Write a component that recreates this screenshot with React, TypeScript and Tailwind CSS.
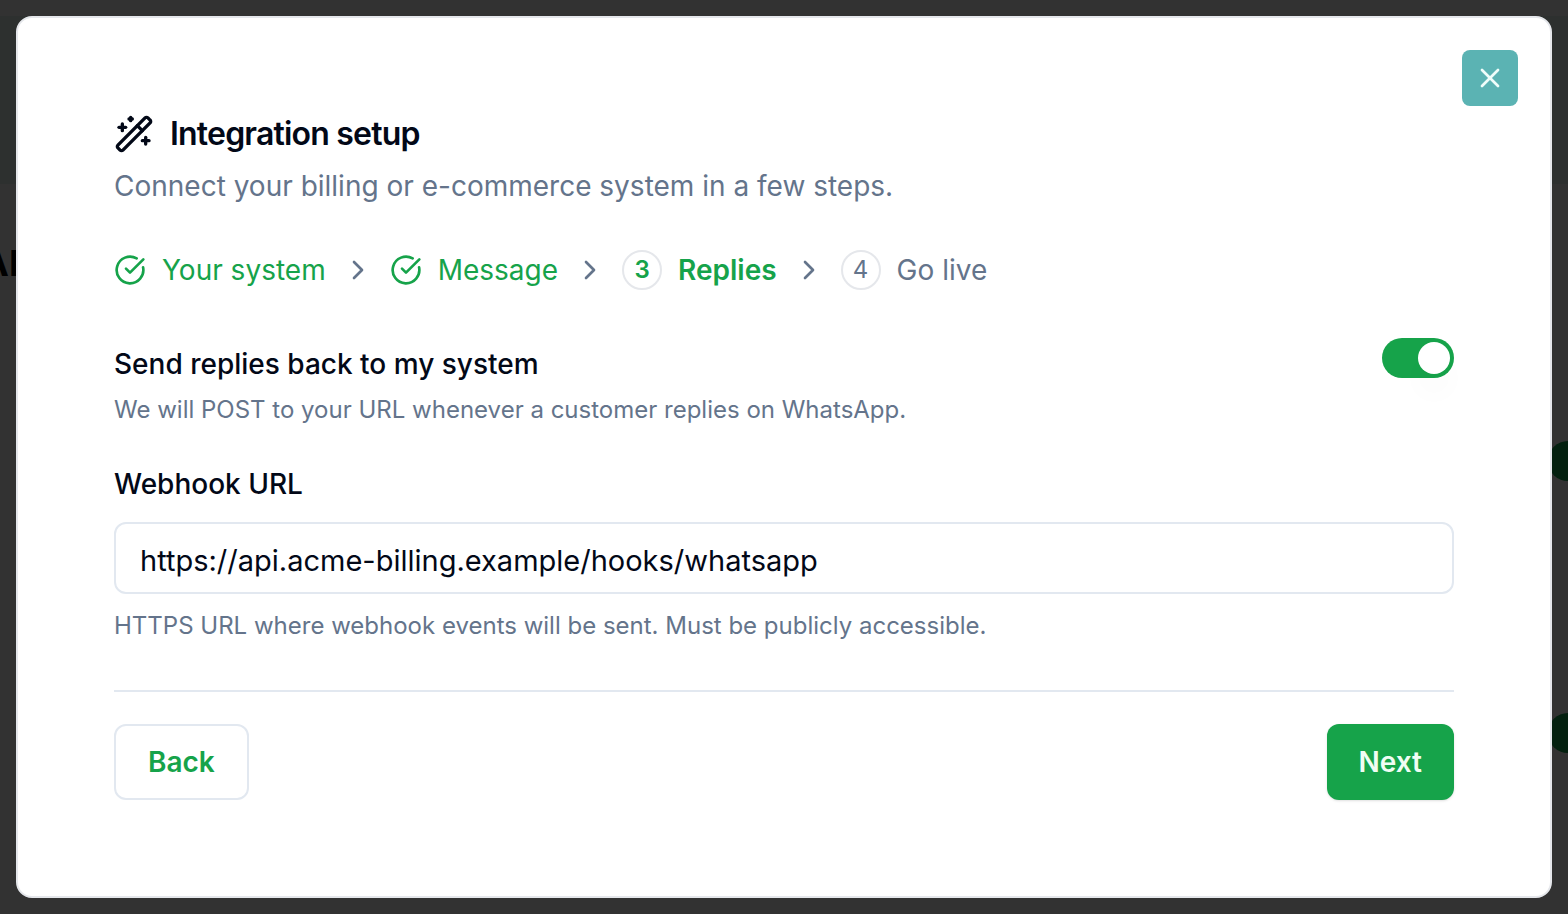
import React, { useState } from 'react';
import { ChevronRight, CircleCheckBig, WandSparkles, X } from 'lucide-react';

interface Step {
  id: number;
  label: string;
}

const steps: Step[] = [
  { id: 1, label: 'Your system' },
  { id: 2, label: 'Message' },
  { id: 3, label: 'Replies' },
  { id: 4, label: 'Go live' },
];

const CURRENT_STEP = 3;

const StepItem: React.FC<{ step: Step }> = ({ step }) => {
  if (step.id < CURRENT_STEP) {
    return (
      <span className="flex items-center gap-4 text-[#16a34a]">
        <CircleCheckBig size={32} />
        {step.label}
      </span>
    );
  }

  const isCurrent = step.id === CURRENT_STEP;

  return (
    <span
      aria-current={isCurrent ? 'step' : undefined}
      className={isCurrent ? 'flex items-center gap-4 font-semibold text-[#16a34a]' : 'flex items-center gap-4 text-[#64748b]'}
    >
      <span className="flex size-10 items-center justify-center rounded-full border-2 border-gray-200 text-2xl">
        {step.id}
      </span>
      {step.label}
    </span>
  );
};

// Dimmed page that shows around the edges of the dialog
const Backdrop: React.FC = () => (
  <div aria-hidden="true" className="absolute inset-0 overflow-hidden bg-[#323232]">
    <div className="absolute inset-x-0 top-4 h-42 bg-[#2d302f]" />
    <div className="absolute top-[243px] -left-[18px] text-4xl font-bold text-black">AI</div>
    <div className="absolute top-[441px] -right-13 h-10 w-18 rounded-full bg-[#03200f]" />
    <div className="absolute top-[713px] -right-13 h-10 w-18 rounded-full bg-[#03200f]" />
  </div>
);

const App: React.FC = () => {
  const [sendReplies, setSendReplies] = useState(true);
  const [url, setUrl] = useState('https://api.acme-billing.example/hooks/whatsapp');

  return (
    <div className="relative min-h-screen p-4 font-['Inter',sans-serif] text-[28px] leading-10 text-[#020817]">
      <Backdrop />
      <div
        role="dialog"
        aria-labelledby="dialog-title"
        className="relative rounded-2xl border-2 border-gray-200 bg-white p-24"
      >
        <button
          type="button"
          aria-label="Close"
          className="absolute top-8 right-8 flex size-14 items-center justify-center rounded-lg bg-[#5bb3b3] text-[#f0fdfa]"
        >
          <X size={32} />
        </button>

        <header className="flex flex-col gap-3">
          <h2 id="dialog-title" className="flex items-center gap-4 text-[32px] font-semibold tracking-tight">
            <WandSparkles size={40} />
            Integration setup
          </h2>
          <p className="text-[#64748b]">Connect your billing or e-commerce system in a few steps.</p>
        </header>

        <ol className="mt-11 flex flex-wrap items-center gap-4">
          {steps.map((step, index) => (
            <li key={step.id} className="flex items-center gap-4">
              {index > 0 && <ChevronRight size={32} className="text-[#64748b]" />}
              <StepItem step={step} />
            </li>
          ))}
        </ol>

        <div className="mt-12 flex items-start justify-between gap-8">
          <div className="flex flex-col gap-3 pt-2">
            <label htmlFor="send-replies" className="leading-9 font-medium">
              Send replies back to my system
            </label>
            <p className="text-2xl leading-8 text-[#64748b]">
              We will POST to your URL whenever a customer replies on WhatsApp.
            </p>
          </div>
          <button
            id="send-replies"
            type="button"
            role="switch"
            aria-checked={sendReplies}
            onClick={() => setSendReplies(!sendReplies)}
            className={
              sendReplies
                ? 'flex h-10 w-18 shrink-0 items-center justify-end rounded-full bg-[#16a34a] p-1'
                : 'flex h-10 w-18 shrink-0 items-center justify-start rounded-full bg-slate-200 p-1'
            }
          >
            <span className="size-8 rounded-full bg-white shadow-[0_20px_30px_-6px_rgba(0,0,0,0.06)]" />
          </button>
        </div>

        <div className="mt-10 flex flex-col">
          <label htmlFor="webhook-url" className="leading-9 font-medium">
            Webhook URL
          </label>
          <input
            id="webhook-url"
            type="url"
            value={url}
            onChange={(e) => setUrl(e.target.value)}
            className="mt-5 h-18 w-full rounded-xl border-2 border-slate-200 bg-white px-6 pt-1 text-[29px] outline-none"
          />
          <p className="mt-4 text-2xl leading-8 text-[#64748b]">
            HTTPS URL where webhook events will be sent. Must be publicly accessible.
          </p>
        </div>

        <footer className="mt-12 flex items-center justify-between border-t-2 border-slate-200 pt-8">
          <button type="button" className="h-19 rounded-xl border-2 border-slate-200 bg-white px-8 font-semibold text-[#16a34a]">
            Back
          </button>
          <button type="button" className="h-19 rounded-xl bg-[#16a34a] px-8 font-semibold text-[#f0fdf4] shadow-sm">
            Next
          </button>
        </footer>
      </div>
    </div>
  );
};

export default App;
